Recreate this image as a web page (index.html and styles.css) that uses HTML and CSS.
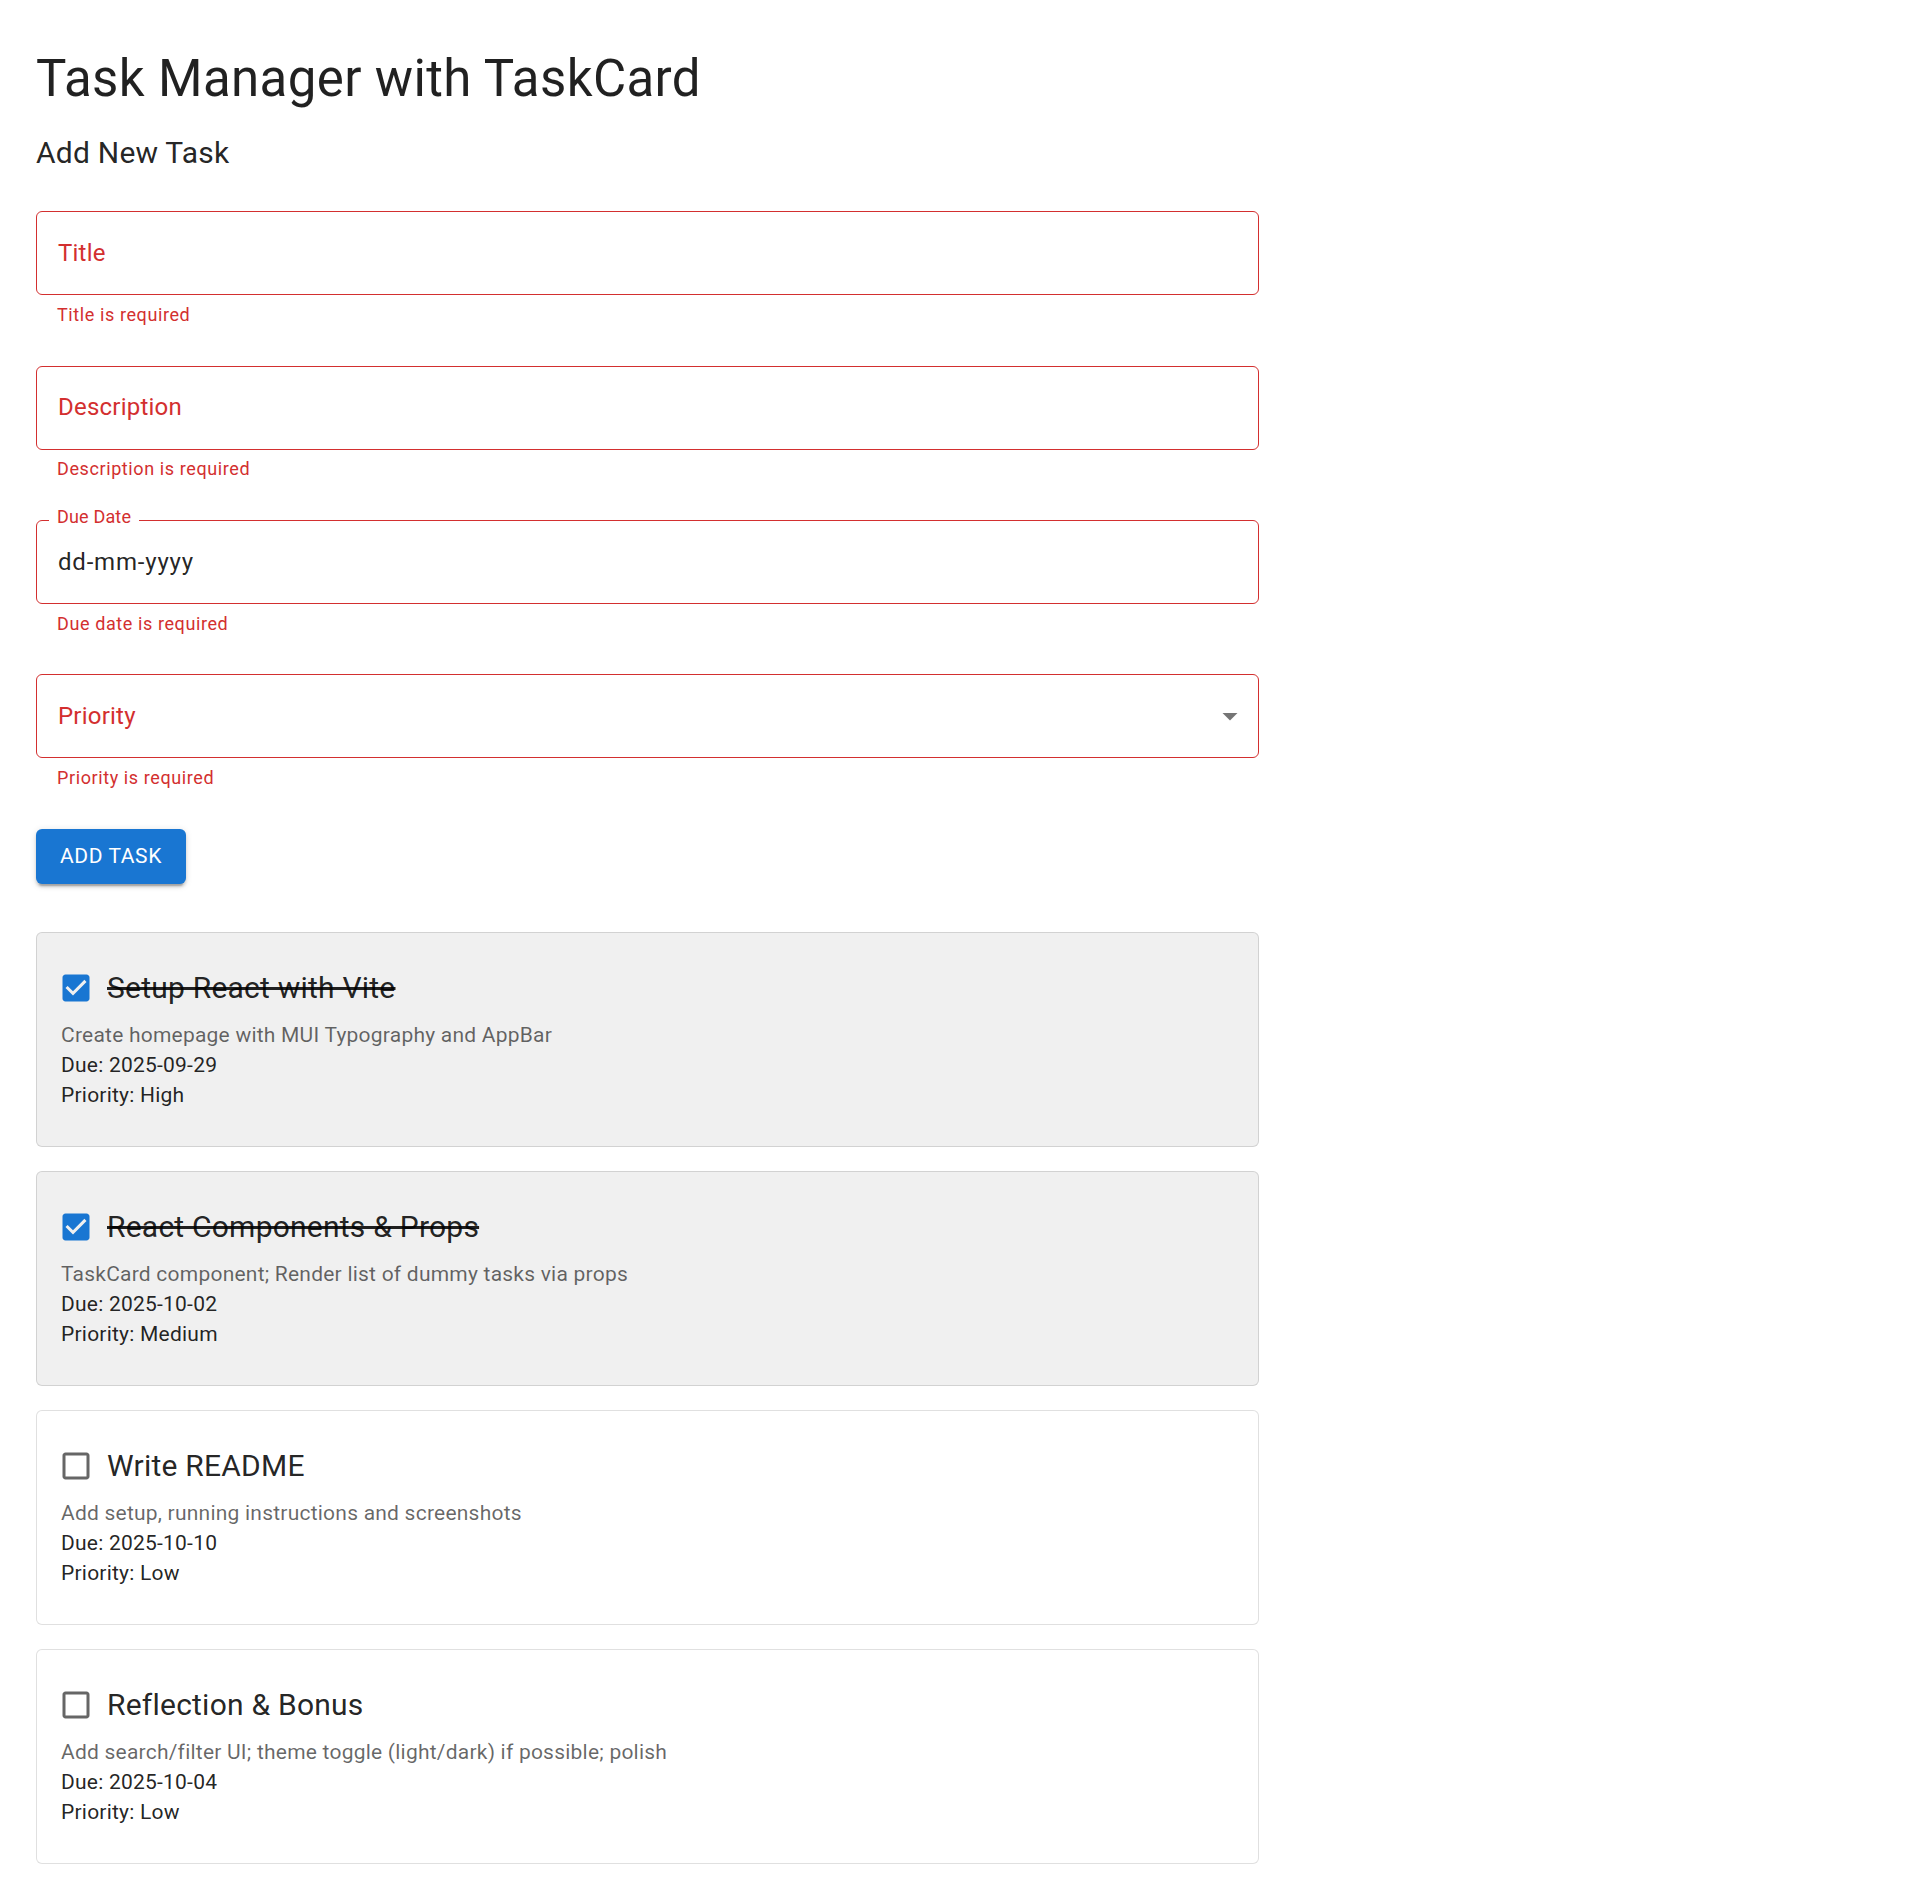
FILE: index.html
```html
<!DOCTYPE html>
<html lang="en">
<head>
<meta charset="utf-8">
<title>Task Manager with TaskCard</title>
<link rel="stylesheet" href="styles.css">
</head>
<body>
<div class="page">
  <h1 class="title">Task Manager with TaskCard</h1>
  <h2 class="subtitle">Add New Task</h2>

  <form class="form">
    <div class="field">
      <div class="outline"><span class="label">Title</span></div>
      <p class="helper">Title is required</p>
    </div>
    <div class="field">
      <div class="outline"><span class="label">Description</span></div>
      <p class="helper">Description is required</p>
    </div>
    <div class="field">
      <div class="outline">
        <span class="notch-label">Due Date</span>
        <span class="value">dd-mm-yyyy</span>
      </div>
      <p class="helper">Due date is required</p>
    </div>
    <div class="field">
      <div class="outline">
        <span class="label">Priority</span>
        <svg class="arrow" viewBox="0 0 24 24" width="36" height="36"><path d="M7 10l5 5 5-5z"/></svg>
      </div>
      <p class="helper">Priority is required</p>
    </div>
    <button type="button" class="btn">Add Task</button>
  </form>

  <div class="list">
    <div class="card card--done">
      <div class="card-head">
        <span class="checkbox checkbox--on"><svg viewBox="0 0 24 24" width="36" height="36"><path d="M19 3H5c-1.11 0-2 .9-2 2v14c0 1.1.89 2 2 2h14c1.11 0 2-.9 2-2V5c0-1.1-.89-2-2-2zm-9 14l-5-5 1.41-1.41L10 14.17l7.590-7.59L19 8l-9 9z"/></svg></span>
        <h3 class="card-title">Setup React with Vite</h3>
      </div>
      <p class="desc">Create homepage with MUI Typography and AppBar</p>
      <p class="meta">Due: 2025-09-29</p>
      <p class="meta">Priority: High</p>
    </div>

    <div class="card card--done">
      <div class="card-head">
        <span class="checkbox checkbox--on"><svg viewBox="0 0 24 24" width="36" height="36"><path d="M19 3H5c-1.11 0-2 .9-2 2v14c0 1.1.89 2 2 2h14c1.11 0 2-.9 2-2V5c0-1.1-.89-2-2-2zm-9 14l-5-5 1.41-1.41L10 14.17l7.59-7.59L19 8l-9 9z"/></svg></span>
        <h3 class="card-title">React Components &amp; Props</h3>
      </div>
      <p class="desc">TaskCard component; Render list of dummy tasks via props</p>
      <p class="meta">Due: 2025-10-02</p>
      <p class="meta">Priority: Medium</p>
    </div>

    <div class="card">
      <div class="card-head">
        <span class="checkbox"><svg viewBox="0 0 24 24" width="36" height="36"><path d="M19 5v14H5V5h14m0-2H5c-1.1 0-2 .9-2 2v14c0 1.1.9 2 2 2h14c1.1 0 2-.9 2-2V5c0-1.1-.9-2-2-2z"/></svg></span>
        <h3 class="card-title">Write README</h3>
      </div>
      <p class="desc">Add setup, running instructions and screenshots</p>
      <p class="meta">Due: 2025-10-10</p>
      <p class="meta">Priority: Low</p>
    </div>

    <div class="card">
      <div class="card-head">
        <span class="checkbox"><svg viewBox="0 0 24 24" width="36" height="36"><path d="M19 5v14H5V5h14m0-2H5c-1.1 0-2 .9-2 2v14c0 1.1.9 2 2 2h14c1.1 0 2-.9 2-2V5c0-1.1-.9-2-2-2z"/></svg></span>
        <h3 class="card-title">Reflection &amp; Bonus</h3>
      </div>
      <p class="desc">Add search/filter UI; theme toggle (light/dark) if possible; polish</p>
      <p class="meta">Due: 2025-10-04</p>
      <p class="meta">Priority: Low</p>
    </div>
  </div>
</div>
</body>
</html>
```

FILE: styles.css
```css
* { box-sizing: border-box; }

body {
  margin: 0;
  background: #fff;
  font-family: Roboto, "Helvetica Neue", Arial, sans-serif;
  color: rgba(0, 0, 0, 0.87);
}

.page {
  width: 1295px;
  padding: 48px 36px 0;
}

.title {
  margin: 0 0 17.85px;
  font-size: 51px;
  font-weight: 400;
  line-height: 1.235;
  letter-spacing: 0.00735em;
}

.subtitle {
  margin: 0 0 10.5px;
  font-size: 30px;
  font-weight: 400;
  line-height: 1.6;
  letter-spacing: 0.0075em;
}

.form {
  display: flex;
  flex-direction: column;
}

.field {
  margin: 24px 0 12px;
}

.outline {
  position: relative;
  display: flex;
  align-items: center;
  height: 84px;
  padding: 0 21px;
  border: 1px solid #d32f2f;
  border-radius: 6px;
}

.label {
  font-size: 24px;
  line-height: 34.5px;
  color: #d32f2f;
  letter-spacing: 0.00938em;
}

.notch-label {
  position: absolute;
  left: 12px;
  top: -13px;
  padding: 0 8px;
  background: #fff;
  font-size: 18px;
  line-height: 18px;
  color: #d32f2f;
  letter-spacing: 0.00938em;
}

.value {
  font-size: 24px;
  line-height: 34.5px;
  letter-spacing: 0.8px;
  color: rgba(0, 0, 0, 0.87);
}

.arrow {
  margin-left: auto;
  margin-right: -11px;
  fill: rgba(0, 0, 0, 0.54);
}

.helper {
  margin: 4.5px 21px 0;
  font-size: 18px;
  line-height: 1.66;
  letter-spacing: 0.03333em;
  color: #d32f2f;
}

.btn {
  align-self: flex-start;
  margin-top: 24px;
  height: 54.75px;
  padding: 9px 24px;
  border: 0;
  border-radius: 6px;
  background: #1976d2;
  color: #fff;
  font-family: Roboto, "Helvetica Neue", Arial, sans-serif;
  font-size: 21px;
  font-weight: 400;
  line-height: 1.75;
  letter-spacing: 0.02857em;
  text-transform: uppercase;
  box-shadow: 0 4.5px 1.5px -3px rgba(0, 0, 0, 0.2), 0 3px 3px 0 rgba(0, 0, 0, 0.14), 0 1.5px 7.5px 0 rgba(0, 0, 0, 0.12);
}

.list {
  margin-top: 48px;
}

.card {
  margin-bottom: 24px;
  padding: 24px 24px 36px;
  border: 1px solid rgba(0, 0, 0, 0.12);
  border-radius: 6px;
  background: #fff;
}

.card--done {
  background: #f0f0f0;
}

.card-head {
  display: flex;
  align-items: center;
  height: 63px;
}

.checkbox {
  display: flex;
  flex: none;
  width: 63px;
  height: 63px;
  padding: 13.5px;
  margin-left: -17px;
  fill: rgba(0, 0, 0, 0.6);
}

.checkbox--on {
  fill: #1976d2;
}

.card-title {
  margin: 0;
  font-size: 30px;
  font-weight: 400;
  line-height: 1.6;
  letter-spacing: 0.0075em;
}

.card--done .card-title {
  text-decoration: line-through;
}

.desc,
.meta {
  margin: 0;
  font-size: 21px;
  line-height: 1.43;
  letter-spacing: 0.01071em;
}

.desc {
  color: rgba(0, 0, 0, 0.6);
}

.meta {
  color: rgba(0, 0, 0, 0.87);
}
```
